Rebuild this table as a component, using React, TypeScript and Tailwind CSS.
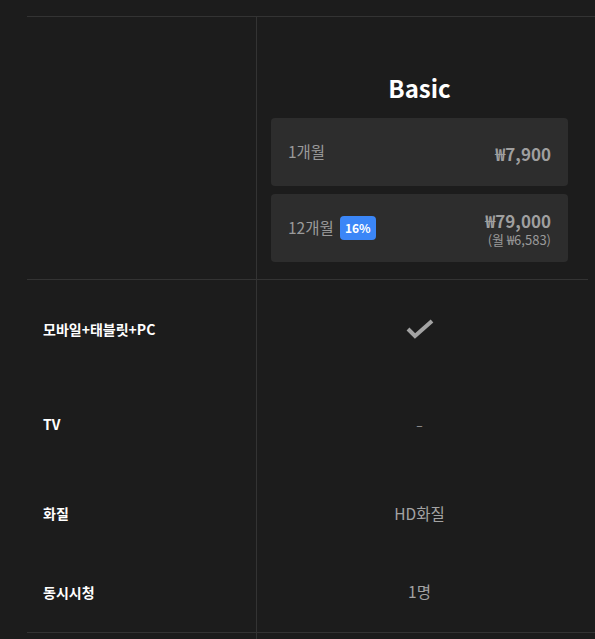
const font = { fontFamily: '"Noto Sans CJK KR", "Noto Sans", sans-serif' };

const rows = [
  { label: "모바일+태블릿+PC", h: "h-[98px]", pad: "", value: "check" },
  { label: "TV", h: "h-[93px]", pad: "", value: "dash" },
  { label: "화질", h: "h-[85px]", pad: "", value: "HD화질" },
  { label: "동시시청", h: "h-[76px]", pad: "pb-[4px]", value: "1명" },
];

function CheckIcon() {
  return (
    <svg width="28" height="20" viewBox="0 0 28 20" fill="none">
      <polyline points="2,10 9,17 26,2" stroke="#a3a3a3" strokeWidth="4" strokeLinejoin="miter" />
    </svg>
  );
}

export default function App() {
  return (
    <div className="h-[639px] w-[595px] overflow-hidden bg-[#1c1c1c] pt-4 pl-[27px]" style={font}>
      <div className="border-t border-[#333333]">
        <div className="flex h-[262px]">
          <div className="w-[230px] shrink-0 border-r border-[#333333]" />
          <div className="flex w-[331px] flex-col pt-[53px] pr-[20px] pl-[14px]">
            <h2 className="mb-[12px] text-center text-[24px] leading-[36px] font-bold text-white">Basic</h2>
            <div className="flex h-[68px] items-center justify-between rounded bg-[#2d2d2d] px-[17px]">
              <span className="text-[15.5px] text-[#9a9a9a]">1개월</span>
              <span className="mt-[3px] text-[17px] font-bold text-[#9f9f9f]">₩7,900</span>
            </div>
            <div className="mt-2 flex h-[68px] items-center justify-between rounded bg-[#2d2d2d] px-[17px]">
              <div className="flex items-center gap-[6px]">
                <span className="text-[15.5px] text-[#9a9a9a]">12개월</span>
                <span className="flex h-6 w-9 items-center justify-center rounded bg-[#3b86f7] text-[12px] font-bold text-white">
                  16%
                </span>
              </div>
              <div className="mt-[3px] flex flex-col items-end">
                <span className="text-[17px] leading-[21px] font-bold text-[#9f9f9f]">₩79,000</span>
                <span className="text-[13px] leading-[18px] text-[#9a9a9a]">(월 ₩6,583)</span>
              </div>
            </div>
          </div>
        </div>
        <div className="mr-[7px] border-t border-[#333333]">
          {rows.map((r) => (
            <div key={r.label} className={`flex ${r.h}`}>
              <div className={`flex w-[230px] shrink-0 items-center border-r border-[#333333] pl-4 text-[14px] font-bold text-white ${r.pad}`}>
                {r.label}
              </div>
              <div className={`flex flex-1 items-center justify-center pr-[6px] text-[15.5px] text-[#a3a3a3] ${r.pad}`}>
                {r.value === "check" ? (
                  <CheckIcon />
                ) : r.value === "dash" ? (
                  <span className="text-[12px]">–</span>
                ) : (
                  r.value
                )}
              </div>
            </div>
          ))}
        </div>
        <div className="flex h-10 border-t border-[#333333]">
          <div className="w-[230px] shrink-0 border-r border-[#333333]" />
        </div>
      </div>
    </div>
  );
}
